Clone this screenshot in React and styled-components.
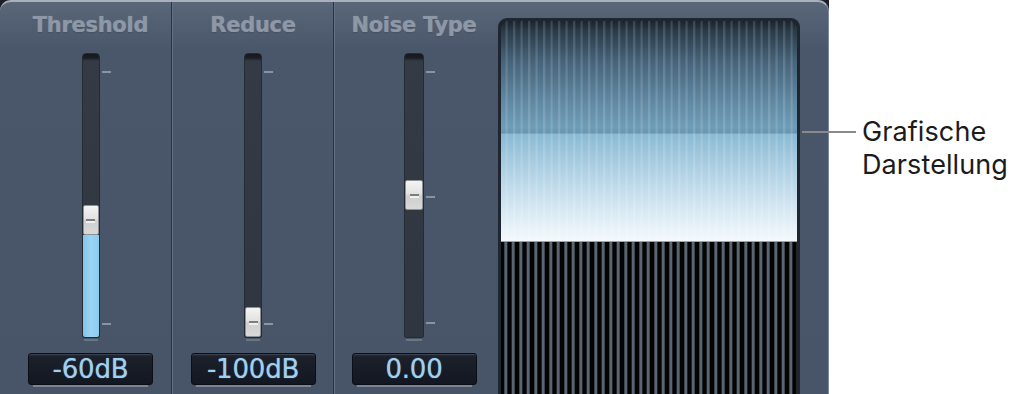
import React from "react";
import styled, { createGlobalStyle } from "styled-components";

const Global = createGlobalStyle`
  html, body { margin: 0; padding: 0; background: #ffffff; }
  body { width: 1024px; height: 394px; overflow: hidden; }
`;

const Page = styled.div`
  position: relative;
  display: flex;
  width: 1024px;
  height: 394px;
  background: #ffffff;
`;

const PanelFrame = styled.div`
  width: 829px;
  height: 394px;
  background: #1c1f25;
`;

const Panel = styled.div`
  display: flex;
  height: 394px;
  box-sizing: border-box;
  border-radius: 11px 11px 0 0;
  border-top: 2px solid #a9b1bc;
  border-right: 1px solid #7d8898;
  background: linear-gradient(
    to bottom,
    #5a6779 0px,
    #536073 20px,
    #4a5669 48px,
    #485467 100%
  );
  background-color: #485467;
  overflow: hidden;
`;

const Column = styled.div`
  width: ${(p) => p.$w}px;
  padding-left: ${(p) => p.$pl || 0}px;
  box-sizing: border-box;
  display: flex;
  flex-direction: column;
  align-items: center;
  padding-top: 11px;
`;

const Title = styled.div`
  font-family: "DejaVu Sans", sans-serif;
  font-weight: bold;
  font-size: 21px;
  line-height: 24px;
  letter-spacing: -0.3px;
  color: #8d97a6;
  text-shadow: 0 0 1px rgba(150, 162, 178, 0.8), 0 1px 1px rgba(40, 48, 60, 0.4);
  white-space: nowrap;
`;

const Separator = styled.div`
  width: 1px;
  border-left: 1px solid #2a3341;
  background: #627185;
  flex: none;
`;

const SliderWrap = styled.div`
  position: relative;
  width: ${(p) => p.$w}px;
  height: 285px;
  margin-top: 16px;
  &::after {
    content: "";
    position: absolute;
    left: 2px;
    right: 2px;
    bottom: -3px;
    height: 2px;
    background: #6b7684;
  }
`;

const Track = styled.div`
  width: 100%;
  height: 100%;
  box-sizing: border-box;
  border: 1px solid #252b33;
  border-radius: 4px 4px 2px 2px;
  background: linear-gradient(
    to bottom,
    #15181c 0px,
    #1b1f24 4px,
    #343b45 7px,
    #2f363f 100%
  );
`;

const Fill = styled.div`
  position: absolute;
  left: 1px;
  right: 1px;
  bottom: 1px;
  border-radius: 0 0 2px 2px;
  background: linear-gradient(to right, #84c4ea, #9ad5f4 50%, #8ccbee);
`;

const Thumb = styled.div`
  position: absolute;
  left: 1px;
  right: 1px;
  height: 30px;
  box-sizing: border-box;
  border: 1px solid #8e9196;
  border-radius: 2px;
  background: linear-gradient(
    to bottom,
    #f4f4f4 0%,
    #e2e2e2 45%,
    #cfcfcf 55%,
    #d9d9d9 100%
  );
  display: flex;
  align-items: center;
  justify-content: center;
  &::before {
    content: "";
    width: 9px;
    height: 2px;
    background: #7b7d80;
    box-shadow: 0 2px 0 #f0f0f0;
  }
`;

const Tick = styled.div`
  position: absolute;
  left: calc(100% + 2px);
  width: 9px;
  height: 2px;
  background: #8993a1;
`;

const ValueBox = styled.div`
  margin-top: 15px;
  width: 125px;
  height: 32px;
  box-sizing: border-box;
  border: 1px solid #0b0e14;
  border-radius: 3px;
  background: linear-gradient(to bottom, #2a303c 0px, #1b202b 3px, #131722 100%);
  box-shadow: inset 0 1px 0 #3a404c, 0 7px 0 -5px #7a8494;
  display: flex;
  align-items: center;
  justify-content: center;
  font-family: "DejaVu Sans", sans-serif;
  font-size: 26px;
  line-height: 30px;
  color: #9fd0ef;
  text-shadow: 0 0 1px rgba(159, 208, 239, 0.7);
  letter-spacing: -0.2px;
`;

const DisplayCol = styled.div`
  flex: none;
  width: 302px;
  margin-left: 5px;
  padding-top: 16px;
  display: flex;
  flex-direction: column;
`;

const Display = styled.div`
  flex: 1;
  display: flex;
  flex-direction: column;
  box-sizing: border-box;
  border: 3px solid #1d2631;
  border-bottom: none;
  border-radius: 9px 9px 0 0;
  overflow: hidden;
  background: #050505;
`;

const Spectrum = styled.div`
  height: 220px;
  flex: none;
  background:
    repeating-linear-gradient(
      90deg,
      rgba(255, 255, 255, 0) 0px,
      rgba(255, 255, 255, 0) 4px,
      rgba(255, 255, 255, 0.14) 5px,
      rgba(255, 255, 255, 0.14) 6px,
      rgba(255, 255, 255, 0) 7.5px
    ),
    linear-gradient(
      to bottom,
      #1a242e 0px,
      #2a3b49 10px,
      #46637a 40px,
      #6088a2 80px,
      #6f9cb7 106px,
      #6895b0 112px,
      #8ab9d2 113px,
      #a6cbe0 140px,
      #c9e0ee 175px,
      #e6f1f8 205px,
      #f4f9fc 220px
    );
  border-bottom: 1px solid #9aa3ad;
`;

const Floor = styled.div`
  flex: 1;
  background: repeating-linear-gradient(
    90deg,
    #040404 0px,
    #040404 2.5px,
    #5b6571 4px,
    #5b6571 5.5px,
    #040404 7px,
    #040404 7.5px
  );
`;

const Callout = styled.div`
  position: absolute;
  left: 802px;
  top: 115px;
  display: flex;
  align-items: flex-start;
`;

const Leader = styled.div`
  width: 54px;
  height: 2px;
  margin-top: 16px;
  background: #8a8a8a;
`;

const CalloutText = styled.div`
  margin-left: 6px;
  font-family: Inter, "Liberation Sans", sans-serif;
  font-size: 27px;
  line-height: 33px;
  letter-spacing: 0.1px;
  color: #1b1b1b;
`;

function Slider({ w = 18, thumbTop, fill, ticks }) {
  return (
    <SliderWrap $w={w}>
      <Track />
      {fill ? <Fill style={{ height: `${285 - thumbTop - 31}px` }} /> : null}
      <Thumb style={{ top: `${thumbTop}px` }} />
      {ticks.map((t) => (
        <Tick key={t} style={{ top: `${t}px` }} />
      ))}
    </SliderWrap>
  );
}

export default function App() {
  return (
    <Page>
      <Global />
      <PanelFrame>
        <Panel>
          <Column $w={171} $pl={10}>
            <Title>Threshold</Title>
            <Slider thumbTop={152} fill ticks={[18, 270]} />
            <ValueBox>-60dB</ValueBox>
          </Column>
          <Separator />
          <Column $w={160}>
            <Title>Reduce</Title>
            <Slider thumbTop={254} ticks={[18, 270]} />
            <ValueBox>-100dB</ValueBox>
          </Column>
          <Separator />
          <Column $w={158}>
            <Title>Noise Type</Title>
            <Slider w={20} thumbTop={127} ticks={[18, 143, 269]} />
            <ValueBox>0.00</ValueBox>
          </Column>
          <DisplayCol>
            <Display>
              <Spectrum />
              <Floor />
            </Display>
          </DisplayCol>
        </Panel>
      </PanelFrame>
      <Callout>
        <Leader />
        <CalloutText>
          Grafische
          <br />
          Darstellung
        </CalloutText>
      </Callout>
    </Page>
  );
}
